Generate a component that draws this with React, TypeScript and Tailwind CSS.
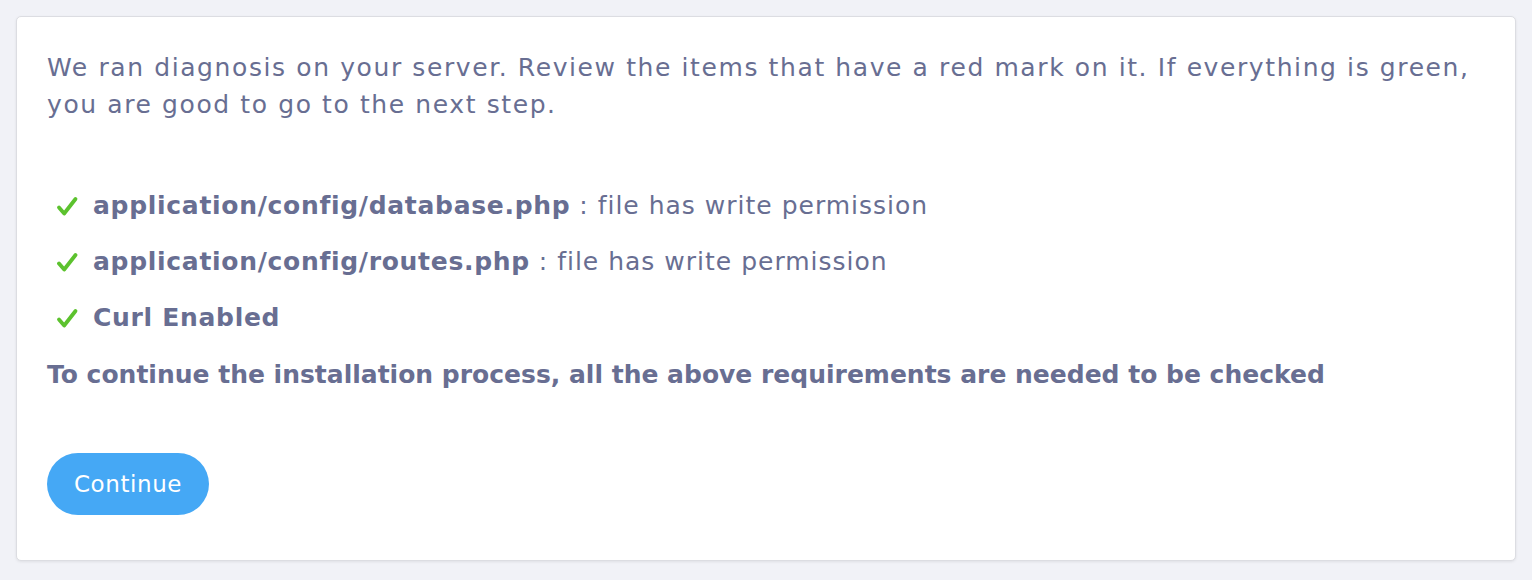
const Check = () => (
    <svg viewBox="0 0 24 24" className="h-[24px] w-[24px] shrink-0" fill="none" stroke="#5cc22e" strokeWidth="3.8" strokeLinecap="round" strokeLinejoin="round">
        <path d="M4 13.5l5.2 6L20.5 5" />
    </svg>
);

const items = [
    {name: "application/config/database.php", note: " : file has write permission"},
    {name: "application/config/routes.php", note: " : file has write permission"},
    {name: "Curl Enabled", note: ""},
];

export default function App() {
    return (
        <div className="min-h-[580px] bg-[#f1f2f7] p-4 font-['DejaVu_Sans',sans-serif] text-[25px] text-[#686e92]">
            <div className="rounded-[5px] border border-[#dcdde2] bg-white px-[30px] pb-[45px] pt-[32px] shadow-[0_1px_3px_rgba(0,0,0,0.08)]">
                <p className="leading-[37px] tracking-[1.6px]">
                    We ran diagnosis on your server. Review the items that have a red mark on it. If everything is green,
                    you are good to go to the next step.
                </p>

                {/* Requirement checks */}
                <ul className="mt-[65px] flex flex-col gap-[20px]">
                    {items.map((item) => (
                        <li key={item.name} className="flex items-center gap-[14px] pl-[8px] leading-[36px]">
                            <Check />
                            <span className="tracking-[1px]">
                                <b className="font-bold tracking-[0.7px]">{item.name}</b>
                                {item.note}
                            </span>
                        </li>
                    ))}
                </ul>
                <p className="mt-[21px] font-bold leading-[36px]">
                    To continue the installation process, all the above requirements are needed to be checked
                </p>

                <button className="mt-[60px] h-[62px] w-[162px] rounded-full bg-[#45a8f5] text-[23px] tracking-[0.6px] text-white">
                    Continue
                </button>
            </div>
        </div>
    );
}
